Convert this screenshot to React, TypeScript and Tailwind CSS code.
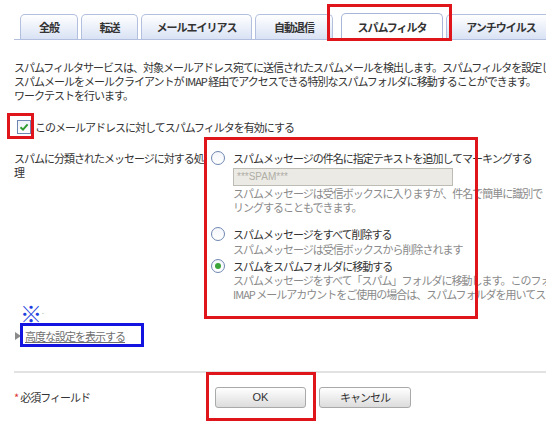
import React from "react";

const font = { fontFamily: '"Noto Sans CJK JP", "Noto Sans", sans-serif' };

function Tab({ label, w, selected }: { label: string; w: string; selected?: boolean }) {
  if (selected) {
    return (
      <div
        className={`${w} h-[27px] -mb-px flex items-center justify-center rounded-t-[5px] border border-b-0 border-[#a8b6da] bg-white text-[11px] font-bold text-[#333]`}
      >
        {label}
      </div>
    );
  }
  return (
    <div
      className={`${w} h-[25px] flex items-center justify-center rounded-t-[5px] border border-b-0 border-[#b3bfdf] bg-gradient-to-b from-white to-[#d9e2f4] text-[11px] font-bold text-[#333]`}
    >
      {label}
    </div>
  );
}

function Radio({ checked }: { checked?: boolean }) {
  return (
    <div className="w-[14px] h-[14px] shrink-0 rounded-full border border-[#6f86b3] bg-gradient-to-b from-[#f4f6fb] to-white flex items-center justify-center">
      {checked && <div className="w-[6px] h-[6px] rounded-full bg-[#3aa43a]" />}
    </div>
  );
}

export default function App() {
  return (
    <div
      className="relative w-[546px] h-[427px] overflow-hidden bg-white text-[11px] text-[#333] tracking-[-1px]"
      style={font}
    >
      {/* tabs */}
      <div className="pt-[13px] pl-[14px]">
        <div className="flex items-end gap-[3px] pl-[6px] border-b border-[#b3bfdf] h-[27px] w-[560px]">
          <Tab label="全般" w="w-[58px]" />
          <Tab label="転送" w="w-[57px]" />
          <Tab label="メールエイリアス" w="w-[111px]" />
          <Tab label="自動退信" w="w-[78px]" />
          <div className="w-[2px]" />
          <Tab label="スパムフィルタ" w="w-[102px]" selected />
          <Tab label="アンチウイルス" w="w-[110px]" />
        </div>
      </div>

      {/* description */}
      <div className="mt-[20px] pl-[14px] leading-[14px] whitespace-nowrap">
        <div>スパムフィルタサービスは、対象メールアドレス宛てに送信されたスパムメールを検出します。スパムフィルタを設定し</div>
        <div>スパムメールをメールクライアントが IMAP 経由でアクセスできる特別なスパムフォルダに移動することができます。</div>
        <div>ワークテストを行います。</div>
      </div>

      {/* enable checkbox */}
      <div className="mt-[17px] pl-[17px] flex items-center gap-[4px] h-[16px]">
        <div className="w-[14px] h-[14px] border border-[#6f86b3] bg-gradient-to-b from-[#eef1f8] to-white flex items-center justify-center">
          <svg width="10" height="10" viewBox="0 0 10 10">
            <path d="M1.5 5.2 L4 7.6 L8.6 2.3" fill="none" stroke="#2f9a2f" strokeWidth="2" />
          </svg>
        </div>
        <span>このメールアドレスに対してスパムフィルタを有効にする</span>
      </div>

      {/* spam handling */}
      <div className="mt-[16px] pl-[14px] flex leading-[14px]">
        <div className="w-[191px] shrink-0">
          スパムに分類されたメッセージに対する処理
        </div>
        <div className="pl-[6px] whitespace-nowrap">
          {/* option 1 */}
          <div className="flex items-center gap-[8px] h-[14px]">
            <Radio />
            <span>スパムメッセージの件名に指定テキストを追加してマーキングする</span>
          </div>
          <div className="pl-[22px]">
            <div className="mt-[3px] w-[220px] h-[18px] border border-[#bdbcb4] bg-[#ebeae5] flex items-center pl-[3px] text-[10px] text-[#b0aea6] tracking-normal" style={{ fontFamily: '"Liberation Sans", sans-serif' }}>
              ***SPAM***
            </div>
            <div className="text-[#8a8a8a] leading-[14px]">
              <div>スパムメッセージは受信ボックスに入りますが、件名で簡単に識別で</div>
              <div>リングすることもできます。</div>
            </div>
          </div>
          {/* option 2 */}
          <div className="mt-[13px] flex items-center gap-[8px] h-[14px]">
            <Radio />
            <span>スパムメッセージをすべて削除する</span>
          </div>
          <div className="pl-[22px] mt-[1px] text-[#8a8a8a]">
            スパムメッセージは受信ボックスから削除されます
          </div>
          {/* option 3 */}
          <div className="mt-[3px] flex items-center gap-[8px] h-[14px]">
            <Radio checked />
            <span>スパムをスパムフォルダに移動する</span>
          </div>
          <div className="pl-[22px] text-[#8a8a8a]">
            <div>スパムメッセージをすべて「スパム」フォルダに移動します。このフォルダは</div>
            <div>IMAP メールアカウントをご使用の場合は、スパムフォルダを用いてスパム</div>
          </div>
        </div>
      </div>

      {/* note + advanced link */}
      <div className="mt-[4px] pl-[20px] h-[14px] flex items-center text-[#1f3fe0] text-[22px] leading-[14px] tracking-normal">※<span className="text-[#3a8a3a] text-[6px] self-end">.</span></div>
      <div className="mt-[9px] pl-[15px] flex items-center gap-[4px] h-[16px]">
        <svg width="6" height="8" viewBox="0 0 6 8"><path d="M0 0 L6 4 L0 8 Z" fill="#8a8a8a" /></svg>
        <span className="text-[#6f6f6f] underline">高度な設定を表示する</span>
      </div>

      {/* separator */}
      <div className="mt-[27px] ml-[14px] h-[2px] bg-[#e2e2e2]" />

      {/* footer */}
      <div className="mt-[14px] pl-[14px] flex items-center">
        <div className="w-[201px] flex items-center gap-[2px]">
          <span className="text-[#d33]">*</span>
          <span>必須フィールド</span>
        </div>
        <button className="w-[91px] h-[21px] rounded-[3px] border border-[#a9a9a9] bg-gradient-to-b from-white to-[#dcdcdc] text-[11px] text-[#333] tracking-normal" style={{ fontFamily: '"Liberation Sans", sans-serif' }}>
          OK
        </button>
        <button className="ml-[13px] w-[92px] h-[21px] rounded-[3px] border border-[#a9a9a9] bg-gradient-to-b from-white to-[#dcdcdc] text-[11px] text-[#333]">
          キャンセル
        </button>
      </div>

      {/* annotation boxes */}
      <div className="absolute left-[327px] top-[4px] w-[125px] h-[37px] border-[3px] border-[#e0141b]" />
      <div className="absolute left-[7px] top-[113px] w-[27px] h-[26px] border-[3px] border-[#e0141b]" />
      <div className="absolute left-[204px] top-[137px] w-[274px] h-[182px] border-[3px] border-[#e0141b]" />
      <div className="absolute left-[20px] top-[323px] w-[124px] h-[24px] border-[3px] border-[#1414e0]" />
      <div className="absolute left-[206px] top-[372px] w-[110px] h-[49px] border-[3px] border-[#e0141b]" />
    </div>
  );
}
